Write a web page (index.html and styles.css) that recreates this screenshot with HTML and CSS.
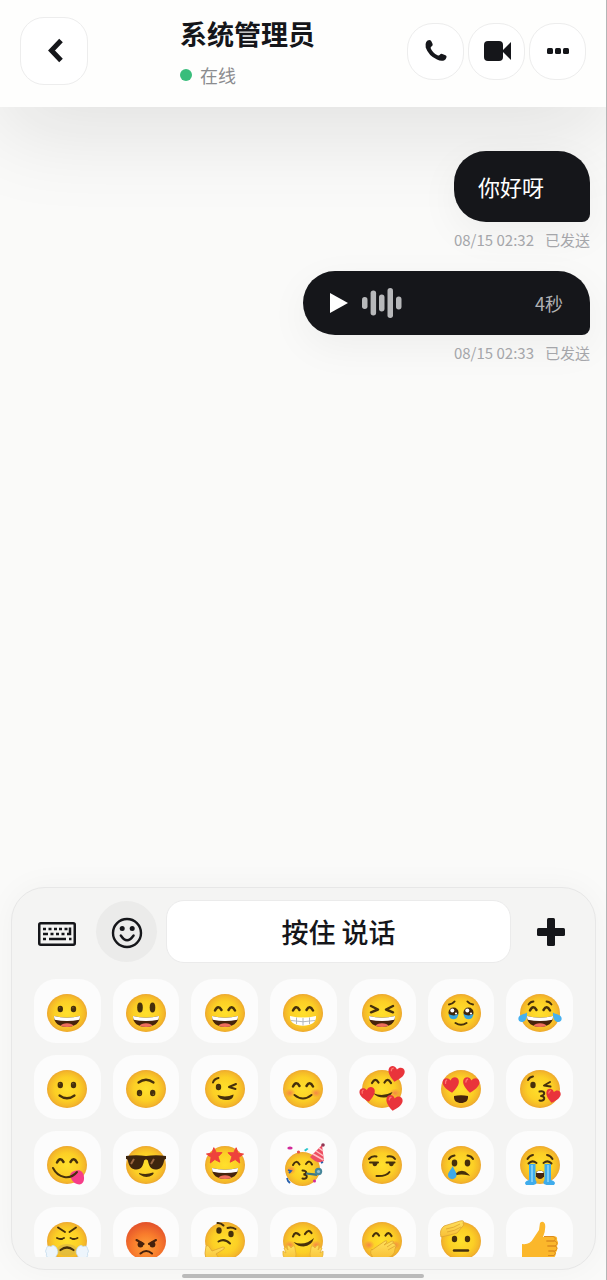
FILE: index.html
```html
<!DOCTYPE html>
<html lang="zh-CN">
<head>
<meta charset="utf-8">
<meta name="viewport" content="width=device-width, initial-scale=1">
<title>系统管理员</title>
<link rel="stylesheet" href="styles.css">
</head>
<body>
<svg class="sprite" aria-hidden="true">
  <defs>
    <radialGradient id="yellow" cx=".5" cy=".5" r=".52"><stop offset="0" stop-color="#ffe02c"/><stop offset=".6" stop-color="#fccf25"/><stop offset=".86" stop-color="#f4b829"/><stop offset="1" stop-color="#e9a031"/></radialGradient>
    <radialGradient id="red" cx=".5" cy=".65" r=".62"><stop offset="0" stop-color="#ffa43a"/><stop offset=".55" stop-color="#f87b2c"/><stop offset="1" stop-color="#e4542b"/></radialGradient>
    <radialGradient id="blush"><stop offset="0" stop-color="#f47c4a" stop-opacity=".85"/><stop offset="1" stop-color="#f47c4a" stop-opacity="0"/></radialGradient>
    <linearGradient id="hand" x2="0" y2="1"><stop offset="0" stop-color="#ffe05c"/><stop offset="1" stop-color="#f8bf36"/></linearGradient>
  </defs>
  <symbol id="face" viewBox="0 0 48 48"><ellipse cx="24" cy="24" rx="20" ry="19" fill="url(#yellow)"/></symbol>
  <symbol id="eyes" viewBox="0 0 48 48"><g fill="#46300c"><ellipse cx="17.3" cy="20" rx="2.700" ry="3.300"/><ellipse cx="30.500" cy="20" rx="2.700" ry="3.300"/></g><g fill="#866329"><circle cx="16.700" cy="18.700" r=".7"/><circle cx="29.900" cy="18.700" r=".7"/></g></symbol>
  <symbol id="happy" viewBox="0 0 48 48"><path d="M14 21.500q3.200-6.200 6.500-.5M27.500 21q3.300-5.700 6.500.5" fill="none" stroke="#46300c" stroke-width="2.500" stroke-linecap="round"/></symbol>
  <symbol id="grin" viewBox="0 0 48 48"><path d="M11 27q13 3.500 26 0c.5 7-5.500 11-13 11S10.500 34 11 27z" fill="#46240c"/><path d="M11 27q13 3.500 26 0 .1 2.200-.7 3.700Q24 33.500 11.700 30.700 11 29 11 27z" fill="#fff"/><path d="M17.500 36.700q1.500-2.500 6.500-2.500t6.500 2.500q-6.500 2.600-13 0z" fill="#ee6d5b"/></symbol>
  <symbol id="smile" viewBox="0 0 48 48"><path d="M16.500 30.500q7.500 5.500 15 0" fill="none" stroke="#46300c" stroke-width="2.200" stroke-linecap="round"/></symbol>
  <symbol id="cheeks" viewBox="0 0 48 48"><ellipse cx="11" cy="28" rx="5.500" ry="4.500" fill="url(#blush)"/><ellipse cx="37" cy="28" rx="5.500" ry="4.500" fill="url(#blush)"/></symbol>
  <symbol id="heart" viewBox="0 0 16 16"><path d="M8 15C2 10.500.5 7.500.8 4.700 1.200 1.200 6 .2 8 4c2-3.800 6.800-2.800 7.200.7C15.500 7.500 14 10.500 8 15z" fill="#e9343b"/><path d="M3.300 6q-.3-2 1.200-2.600" fill="none" stroke="#ff7770" stroke-width="1.200" stroke-linecap="round"/></symbol>
  <symbol id="star" viewBox="0 0 18 18"><path d="M9 .7l2.300 5.500 6 .5-4.600 3.900 1.400 5.900L9 13.300l-5.100 3.200 1.400-5.900L.7 6.700l6-.5z" fill="#ee423c" stroke="#ee423c" stroke-linejoin="round"/></symbol>
</svg>

<div class="app">
  <header class="header">
    <button class="back" type="button" aria-label="返回">
      <svg width="24" height="28" viewBox="0 0 24 28"><path d="M19 3.500 9.500 13.500 19 23.500" fill="none" stroke="#15161a" stroke-width="5"/></svg>
    </button>
    <div class="contact">
      <h1 class="contact-name">系统管理员</h1>
      <p class="contact-status"><span class="dot"></span>在线</p>
    </div>
    <div class="actions">
      <button class="action" type="button" aria-label="语音通话">
        <svg width="24" height="24" viewBox="0 0 24 24"><path d="M2.200 3Q3.200 1.200 5.500 1 7 1 7.600 2.700L8.600 5Q9.100 6.500 7.800 7.300 6.400 8 6.700 9.300 8.500 14 13.500 16.300 15.200 16.900 15.900 15.700 16.800 14.300 18.300 14.900L21.500 16.200Q22.900 16.900 22.500 18.300 22 20.500 20 21.400 17 22.500 13 20.600 4.500 16.600 1.700 8.500 1 5.200 2.200 3Z" fill="#15161a"/></svg>
      </button>
      <button class="action" type="button" aria-label="视频通话">
        <svg width="28" height="20" viewBox="0 0 28 20"><rect x="1" width="19" height="20" rx="4" fill="#15161a"/><path d="m19 10 9-9v18z" fill="#15161a"/></svg>
      </button>
      <button class="action" type="button" aria-label="更多">
        <svg width="22" height="6" viewBox="0 0 22 6"><g fill="#15161a"><rect width="6" height="6" rx="1.500"/><rect x="8" width="6" height="6" rx="1.500"/><rect x="16" width="6" height="6" rx="1.500"/></g></svg>
      </button>
    </div>
  </header>

  <main class="messages">
    <article class="message">
      <p class="bubble">你好呀</p>
      <p class="meta"><time>08/15 02:32</time><span>已发送</span></p>
    </article>
    <article class="message">
      <button class="bubble voice" type="button">
        <svg width="18" height="20" viewBox="0 0 18 20"><path d="M0 0 18 10 0 20z" fill="#fff"/></svg>
        <svg width="40" height="30" viewBox="0 0 40 30"><g fill="#b7b8ba"><rect y="9" width="5.500" height="12" rx="2.700"/><rect x="8.600" y="2.500" width="5.500" height="25" rx="2.700"/><rect x="17" y="6.500" width="5.500" height="17" rx="2.700"/><rect x="25.500" width="5.500" height="30" rx="2.700"/><rect x="34" y="8.500" width="5.500" height="13" rx="2.700"/></g></svg>
        <span class="duration">4秒</span>
      </button>
      <p class="meta"><time>08/15 02:33</time><span>已发送</span></p>
    </article>
  </main>

  <section class="composer">
    <div class="toolbar">
      <button class="tool" type="button" aria-label="键盘">
        <svg width="38" height="28" viewBox="0 -4 38 28"><rect x="1.250" y="1.250" width="35.500" height="21.500" rx="1.500" fill="none" stroke="#15161a" stroke-width="2.500"/><path d="M5 7h3m2.500 0h3M16 7h3m2 0h3m2.500 0h3M5 12h5m2.500 0h3m2.500 0h3m2.500 0h3M5 17h3m3 0h17m3 0h2.500M29 12h3V5.500" fill="none" stroke="#15161a" stroke-width="2.500"/></svg>
      </button>
      <button class="tool tool-active" type="button" aria-label="表情">
        <svg width="32" height="34" viewBox="0 -2 32 34"><circle cx="16" cy="16" r="14" fill="none" stroke="#15161a" stroke-width="2.400"/><circle cx="11.200" cy="11.500" r="2.500" fill="#15161a"/><circle cx="21.200" cy="11.500" r="2.500" fill="#15161a"/><path d="M9.800 18.500q6.200 9.500 12.800 0" fill="none" stroke="#15161a" stroke-width="2.400" stroke-linecap="round"/></svg>
      </button>
      <button class="talk" type="button">按住 说话</button>
      <button class="tool" type="button" aria-label="添加">
        <svg width="28" height="28" viewBox="0 0 28 28"><g fill="#15161a"><rect x="10" width="8" height="28" rx="1.500"/><rect y="10" width="28" height="8" rx="1.500"/></g></svg>
      </button>
    </div>

    <div class="emoji-grid">
      <button class="emoji" type="button" aria-label="嘿嘿"><svg viewBox="0 0 48 48"><use href="#face"/><use href="#eyes"/><use href="#grin"/></svg></button>
      <button class="emoji" type="button" aria-label="哈哈"><svg viewBox="0 0 48 48"><use href="#face"/><g fill="#46300c"><ellipse cx="18" cy="18.500" rx="2.800" ry="5"/><ellipse cx="30.500" cy="18.500" rx="2.800" ry="5"/></g><use href="#grin"/></svg></button>
      <button class="emoji" type="button" aria-label="大笑"><svg viewBox="0 0 48 48"><use href="#face"/><use href="#happy"/><use href="#grin"/></svg></button>
      <button class="emoji" type="button" aria-label="露齿笑"><svg viewBox="0 0 48 48"><use href="#face"/><use href="#happy"/><path d="M11 27q13 3 26 0c.5 6.500-5 9.700-13 9.700S10.500 33.500 11 27z" fill="#fff"/><path d="M12 31.500q12 2.500 24 0M17.500 28.500v6.500M24 29v7.500M30.500 28.500v6.500" fill="none" stroke="#a9b0b8" stroke-width=".9"/></svg></button>
      <button class="emoji" type="button" aria-label="眯眼笑"><svg viewBox="0 0 48 48"><use href="#face"/><path d="m13 17 7 3.500-7 2.800M35 17l-7 3.500 7 2.800" fill="none" stroke="#46300c" stroke-width="2.500" stroke-linecap="round" stroke-linejoin="round"/><use href="#grin"/></svg></button>
      <button class="emoji" type="button" aria-label="忍住泪水"><svg viewBox="0 0 48 48"><use href="#face"/><g fill="#40270c"><circle cx="16.500" cy="23.500" r="5"/><circle cx="31.500" cy="23.500" r="5"/></g><path d="M11.500 25q5 2.800 10 0-.8 5.200-5 5.200T11.500 25zM26.500 25q5 2.800 10 0-.8 5.200-5 5.200t-5-5.200z" fill="#36a5dd"/><g fill="#fff"><circle cx="15.300" cy="21.500" r="2"/><circle cx="30.300" cy="21.500" r="2"/><circle cx="19" cy="24.500" r="1.100"/><circle cx="34" cy="24.500" r="1.100"/></g><path d="M12 15.500q3.500-.3 5.500-3M30.500 12.500q2 2.700 5.500 3M18.500 34q5.500 3.700 11 0" fill="none" stroke="#46300c" stroke-width="2" stroke-linecap="round"/></svg></button>
      <button class="emoji" type="button" aria-label="笑哭"><svg viewBox="0 0 48 48"><use href="#face"/><path d="M12.500 15.500q2-3 5-3M30.500 12.500q3 0 5 3" fill="none" stroke="#46300c" stroke-width="1.800" stroke-linecap="round"/><use href="#happy"/><use href="#grin"/><path d="M11 23.500c.5 5-1.500 9.500-5 9.500-4 0-4.800-4.500-2-6.500 2-1.400 5-1.500 7-3zM37 23.500c-.5 5 1.500 9.500 5 9.500 4 0 4.800-4.500 2-6.500-2-1.400-5-1.500-7-3z" fill="#45b0ef"/></svg></button>

      <button class="emoji" type="button" aria-label="微笑"><svg viewBox="0 0 48 48"><use href="#face"/><use href="#eyes"/><use href="#smile"/></svg></button>
      <button class="emoji" type="button" aria-label="倒脸"><svg viewBox="0 0 48 48"><use href="#face"/><g transform="rotate(180 24 24)"><use href="#eyes"/><use href="#smile"/></g></svg></button>
      <button class="emoji" type="button" aria-label="眨眼"><svg viewBox="0 0 48 48"><use href="#face"/><ellipse cx="17.500" cy="22" rx="2.700" ry="3.200" fill="#46300c"/><path d="M12 17.500q1-3.500 5.500-4.500M35 19l-7 3 6.500 2" fill="none" stroke="#46300c" stroke-width="2" stroke-linecap="round" stroke-linejoin="round"/><path d="M16.500 30q8 3 16-.5c0 4.500-4 6-8 5.500s-7-1.500-8-5z" fill="#46300c"/></svg></button>
      <button class="emoji" type="button" aria-label="羞涩微笑"><svg viewBox="0 0 48 48"><use href="#face"/><use href="#cheeks"/><use href="#happy"/><path d="M15.500 30q8.500 7 17 0" fill="none" stroke="#46300c" stroke-width="2" stroke-linecap="round"/></svg></button>
      <button class="emoji" type="button" aria-label="喜爱"><svg viewBox="0 0 48 48"><use href="#face"/><use href="#cheeks"/><path d="M14 18q3.200-6 6.500-.5M26.500 17.500q3.300-5.500 6.500.5" fill="none" stroke="#46300c" stroke-width="2.200" stroke-linecap="round"/><path d="M15 28q9.500 4.500 19.500-1-2 5.500-8.500 5.500-6.500.2-11-4.500z" fill="#46300c"/><use href="#heart" x="29" y="0" width="18" height="18" transform="rotate(12 38 9)"/><use href="#heart" x="1" y="21" width="17" height="17" transform="rotate(-10 9 29)"/><use href="#heart" x="27" y="29" width="18" height="18" transform="rotate(10 36 38)"/></svg></button>
      <button class="emoji" type="button" aria-label="花痴"><svg viewBox="0 0 48 48"><use href="#face"/><use href="#heart" x="5" y="11" width="18" height="18" transform="rotate(-7 13 19)"/><use href="#heart" x="25" y="11" width="18" height="18" transform="rotate(7 35 19)"/><path d="M17 31q7-1.500 14 0c.5 5-3 7-7 7s-7.500-2-7-7z" fill="#46240c"/></svg></button>
      <button class="emoji" type="button" aria-label="飞吻"><svg viewBox="0 0 48 48"><use href="#face"/><ellipse cx="17" cy="20" rx="2.700" ry="3.200" fill="#46300c"/><path d="M12 15q1.500-3 5-3.500M34 17l-6 3.500 6.500 1M23.500 26.500c6-1 6 3.500 1.500 4.500 5 .5 4 5.500-1.500 4.500" fill="none" stroke="#46300c" stroke-width="2" stroke-linecap="round" stroke-linejoin="round"/><use href="#heart" x="29" y="23" width="16" height="16" transform="rotate(12 37 31)"/></svg></button>

      <button class="emoji" type="button" aria-label="好吃"><svg viewBox="0 0 48 48"><use href="#face"/><use href="#happy"/><path d="M27.500 36c-1-4 2-6 6-6.500 4-1 7 1.500 7.500 6.500.5 6-3 8.500-7 7-3.500-1-5.500-4-6.500-7z" fill="#f63d88"/><path d="M10 27c5 10 17 12.500 24 4" fill="none" stroke="#46300c" stroke-width="2" stroke-linecap="round"/></svg></button>
      <button class="emoji" type="button" aria-label="墨镜"><svg viewBox="0 0 48 48"><use href="#face"/><path d="M4 15q10-1.500 20 0 10-1.500 20 0v3q-2 0-2 2c-1 6-4 8.500-8.500 8.500-5 0-6.500-4-7.500-8.500-.5-2-3.500-2-4 0-1 4.500-2.500 8.500-7.500 8.500C10 28.500 7 26 6 20q0-2-2-2z" fill="#3e250d"/><path d="m9 23 3-5M29 23l3-5" stroke="#9a6540" stroke-width="2"/><path d="M17 32q7 2 14-.5 1.500.5-.5 2.500-6 4-12 0-2-1-1.500-2z" fill="#46300c"/></svg></button>
      <button class="emoji" type="button" aria-label="好崇拜"><svg viewBox="0 0 48 48"><use href="#face"/><use href="#grin"/><use href="#star" x="5" y="6" width="17" height="17" transform="rotate(-5 13 15)"/><use href="#star" x="26" y="6" width="17" height="17" transform="rotate(5 34 15)"/></svg></button>
      <button class="emoji" type="button" aria-label="聚会"><svg viewBox="0 0 48 48"><ellipse cx="23.500" cy="28" rx="17.500" ry="17" fill="url(#yellow)"/><ellipse cx="12" cy="29" rx="5" ry="4.500" fill="url(#blush)"/><path d="m31 16 12-12 2 16q-6 4-14-4z" fill="#ee4e62"/><path d="m34 13 10.500 6M37 10l7.500 5M40 7l4 3" stroke="#ffc0c4" stroke-width="1.500"/><circle cx="44" cy="4" r="1.800" fill="#923653"/><path d="M14 24q3-6 6.500-.5M27 23q3.500-5 6 .5M23.500 29.500c5 .5 4.500 3 1 4 5 0 4 5-1 4" fill="none" stroke="#46300c" stroke-width="2" stroke-linecap="round"/><path d="M27 33.500 38 35v-2.500l-11-1z" fill="#3e7782"/><circle cx="39.500" cy="30.500" r="3.700" fill="#46869a"/><circle cx="39.500" cy="30.500" r="1.600" fill="#9cc3cb"/><g fill="#d22a9a"><ellipse cx="11" cy="7" rx="2.700" ry="1.500"/><circle cx="35.500" cy="40" r="1.500"/></g><circle cx="19.500" cy="11" r="1.600" fill="#e4514b"/><path d="m25 9 3-2 1.500 1-3 2.500z" fill="#25c3ca"/><path d="m9 29 3 1-2 2M8 37l1 3 2 2M42 22l2-1" fill="none" stroke="#265fad" stroke-width="1.800"/></svg></button>
      <button class="emoji" type="button" aria-label="得意"><svg viewBox="0 0 48 48"><use href="#face"/><path d="M11 18q3-3.500 7.500-2.500M29.500 15.500q5-1 7.500 2.500M12 21.500h8M28.500 21.500h8M18.500 35q10 .5 13-4" fill="none" stroke="#46300c" stroke-width="2" stroke-linecap="round"/><path d="M14.500 22h5q-.5 3.200-2.700 3.200T14.500 22zM31 22h5q-.5 3.200-2.700 3.200T31 22z" fill="#46300c"/></svg></button>
      <button class="emoji" type="button" aria-label="哭"><svg viewBox="0 0 48 48"><use href="#face"/><g fill="#46300c"><ellipse cx="17.500" cy="22" rx="2.800" ry="3.400"/><ellipse cx="30.500" cy="22" rx="2.800" ry="3.400"/></g><path d="M12 18q1.500-3 5.500-3.500M30.500 14.500q4 .5 5.500 3.500" fill="none" stroke="#46300c" stroke-width="2" stroke-linecap="round"/><path d="M18.500 33.500q6.500-6 12.500 0-6.500-1.500-12.500 0z" fill="#46300c" stroke="#46300c" stroke-width="1.300"/><path d="M15.500 25c2 4 4 6.500 4 9 0 5.500-8.500 5.500-8.500 0 0-3 3-5 4.500-9z" fill="#3ea9e8"/></svg></button>
      <button class="emoji" type="button" aria-label="放声大哭"><svg viewBox="0 0 48 48"><use href="#face"/><path d="M11.500 18q2-3.500 5.500-4M31 14q3.500.5 5.500 4M12.500 22.500q3.500-4 8-.5M27.500 22q4.500-3.500 8 .5" fill="none" stroke="#46300c" stroke-width="2" stroke-linecap="round"/><path d="M13 23h6.500v16q3 4-2 5H10q-3-3 3-5zM28.500 23H35v16q6 2 3 5h-7.500q-5-1-2-5z" fill="#3facec"/><path d="M16 24v17M32 24v17" stroke="#7bcdf5" stroke-width="2"/><path d="M20 31q4-3 8 0v4.500q-4 5-8 0z" fill="#46240c"/><path d="M20.500 31q3.500-2.500 7 0v1h-7z" fill="#fff"/></svg></button>

      <button class="emoji" type="button" aria-label="傲慢"><svg viewBox="0 0 48 48"><use href="#face"/><path d="m15 10.500 7 4.500M26.500 15l6.500-4.500M14 21q3.500 2 7 0M27.500 21q3.500 2 7 0" fill="none" stroke="#46300c" stroke-width="1.900" stroke-linecap="round"/><path d="M16 21.500h4.500q-2 3-4.500 0zM28 21.500h4.500q-2 3-4.500 0z" fill="#46300c"/><ellipse cx="24" cy="33" rx="10" ry="6" fill="#dcb744" opacity=".7"/><path d="M17.500 33q6.500-5 13 0" fill="none" stroke="#46300c" stroke-width="2.200" stroke-linecap="round"/><g fill="#edf5fc" stroke="#bdd7ea" stroke-width=".7"><path d="M13 30q-3-3-5-.5-4-1.500-4.500 2-2 3 0 5-1 5 4 4 5 2 6-2 3-4-.5-8.500zM35 30q3-3 5-.5 4-1.500 4.500 2 2 3 0 5 1 5-4 4-5 2-6-2-3-4 .5-8.500z"/></g></svg></button>
      <button class="emoji" type="button" aria-label="发怒"><svg viewBox="0 0 48 48"><ellipse cx="24" cy="24" rx="20" ry="19" fill="url(#red)"/><g fill="#46210c"><circle cx="18.500" cy="27.500" r="2.900"/><circle cx="30.500" cy="27.500" r="2.900"/></g><path d="m14.500 23 7 4M34 23l-7 4M18.500 36.500q5.700-5 11.500 0" fill="none" stroke="#46210c" stroke-width="2.100" stroke-linecap="round"/></svg></button>
      <button class="emoji" type="button" aria-label="想一想"><svg viewBox="0 0 48 48"><use href="#face"/><g fill="#46300c"><ellipse cx="18" cy="13.500" rx="2.700" ry="3.200"/><ellipse cx="30" cy="17" rx="2.700" ry="3.200"/></g><path d="M16.500 6q3-.5 6 2.500M26.500 11q4-1.500 8 1M17.500 24.500q6-3.500 11.500 2" fill="none" stroke="#46300c" stroke-width="2" stroke-linecap="round"/><path d="M5 29q2-2 4 2l2 3 11-4q2.500 0 1 2l-8 5q3 2 1 5-5 4-11 0-2-5 0-13z" fill="url(#hand)" stroke="#dda331" stroke-width=".8"/></svg></button>
      <button class="emoji" type="button" aria-label="抱抱"><svg viewBox="0 0 48 48"><use href="#face"/><use href="#cheeks"/><path d="M14 19.500q2-6 6.500-1.500M26 17q3.500-5.500 6.500-1" fill="none" stroke="#46300c" stroke-width="2.200" stroke-linecap="round"/><path d="M14.500 25q11 4.500 20.500-4-2.500 8-10.500 8.500-6 0-10-4.500z" fill="#46300c"/><path d="m4 34 3 2-2-5q2-2 4 2l-1-4q2-2 4 2l2-2q2-1 2 2l1 6q0 7-6 7-8-1-7-10zM44 34l-3 2 2-5q-2-2-4 2l1-4q-2-2-4 2l-2-2q-2-1-2 2l-1 6q0 7 6 7 8-1 7-10z" fill="url(#hand)" stroke="#e5ae35" stroke-width=".8"/></svg></button>
      <button class="emoji" type="button" aria-label="不语"><svg viewBox="0 0 48 48"><use href="#face"/><use href="#cheeks"/><path d="M15 19q3-5.500 6-.5M27.500 18.500q3-5 6 .5" fill="none" stroke="#46300c" stroke-width="2.200" stroke-linecap="round"/><path d="m14 33 13-9q2-1 2 1l-3 3 8-4q2.500 0 1 2l2 1 1 2-1 3q0 7-8 9l-12 1q-7-6-3-10z" fill="url(#hand)" stroke="#dda331" stroke-width=".8"/><path d="m29 30 6-4M30 33l7-4" stroke="#dda331" stroke-width=".8"/></svg></button>
      <button class="emoji" type="button" aria-label="致敬"><svg viewBox="0 0 48 48"><use href="#face"/><g fill="#46300c"><ellipse cx="17.500" cy="22" rx="2.700" ry="3.200"/><ellipse cx="30.500" cy="22" rx="2.700" ry="3.200"/></g><path d="M17 33.500h14" stroke="#46300c" stroke-width="2.400" stroke-linecap="round"/><path d="M4 20q-2-7 3-11L23 4q5-1 3 2 2 2-1 4l-5 6-7 2z" fill="url(#hand)" stroke="#dda331" stroke-width=".8"/><path d="M9 12q8-1 14-5M10 15q8-1 14-5" fill="none" stroke="#dda331" stroke-width=".8"/></svg></button>
      <button class="emoji" type="button" aria-label="赞"><svg viewBox="0 0 48 48"><path d="M6 27q8 1 11-5l6-9 1-7q3-3 5 1 1 6-2 13l10-1q5 0 4 4 2 3 0 6 1 4-1 6 0 5-3 6-3 4-12 4H14l-8-3z" fill="#fbb72b"/><path d="M28 19.500h9q4 1 1 4.500h-8m1 0h8q4 2 0 5h-8m1 0h7q4 2 0 5h-7m1 0h5q3 2 0 4.500h-6" fill="none" stroke="#dc8b1f" stroke-width="1"/></svg></button>
    </div>
  </section>
  <div class="home-indicator"></div>
</div>
</body>
</html>
```

FILE: styles.css
```css
* {
  box-sizing: border-box;
}

body {
  margin: 0;
  color: #15161a;
  background: #fafaf9;
  font-family: "Noto Sans CJK SC", "Noto Sans", sans-serif;
}

h1,
p {
  margin: 0;
}

button {
  padding: 0;
  border: 0;
  color: inherit;
  background: none;
  font: inherit;
}

svg {
  display: block;
  flex: none;
}

.sprite {
  position: absolute;
  width: 0;
  height: 0;
}

.app {
  display: flex;
  flex-direction: column;
  height: 100vh;
  overflow: hidden;
  border-right: 1px solid #b5b5b6;
}

.header {
  display: flex;
  flex: none;
  align-items: center;
  justify-content: space-between;
  padding: 15px 20px 20px;
  background: #fefefd;
  box-shadow: 0 24px 88px rgba(20, 20, 22, 0.11);
}

.back,
.action {
  display: flex;
  align-items: center;
  justify-content: center;
  border: 1px solid #ededed;
  background: #fff;
}

.back {
  width: 68px;
  height: 68px;
  border-radius: 24px;
}

.contact-name {
  font-size: 27px;
  font-weight: 700;
  line-height: 38px;
}

.contact-status {
  display: flex;
  align-items: center;
  gap: 8px;
  margin-top: 10px;
  color: #8b8c8f;
  font-size: 18px;
  line-height: 24px;
}

.dot {
  width: 12px;
  height: 12px;
  border-radius: 50%;
  background: #39bd7b;
}

.actions {
  display: flex;
  gap: 4px;
}

.action {
  width: 57px;
  height: 57px;
  border-radius: 26px;
}

.messages {
  display: flex;
  flex: 1;
  flex-direction: column;
  align-items: flex-end;
  gap: 21px;
  min-height: 0;
  padding: 44px 16px 20px;
}

.message {
  display: flex;
  flex-direction: column;
  gap: 7px;
}

.bubble {
  padding: 18px 24px;
  border-radius: 32px 32px 8px 32px;
  color: #fff;
  background: #15161a;
  box-shadow: 0 12px 40px rgba(20, 20, 22, 0.05);
  font-size: 22px;
  line-height: 35px;
}

.voice {
  display: flex;
  align-items: center;
  gap: 14px;
  width: 287px;
  height: 64px;
  padding: 0 27px;
}

.duration {
  margin-left: auto;
  color: #b0b1b3;
  font-size: 18px;
}

.meta {
  display: flex;
  align-self: flex-end;
  gap: 11px;
  color: #a5a6aa;
  font-size: 15px;
  line-height: 21px;
}

.composer {
  flex: none;
  margin: 0 10px 0 11px;
  padding: 12px 14px;
  border: 1px solid #e7e7e7;
  border-radius: 34px;
  background: #f4f4f3;
  box-shadow: 0 0 32px rgba(20, 20, 22, 0.04);
}

.toolbar {
  display: flex;
  align-items: center;
  gap: 9px;
}

.tool {
  display: flex;
  flex: none;
  align-items: center;
  justify-content: center;
  width: 61px;
  height: 61px;
  border-radius: 50%;
}

.tool-active {
  background: #ebebea;
}

.talk {
  flex: 1;
  height: 63px;
  border: 1px solid #ebebeb;
  border-radius: 18px;
  background: #fff;
  font-size: 27px;
  font-weight: 500;
}

.emoji-grid {
  display: grid;
  grid-template-columns: repeat(7, 1fr);
  grid-auto-rows: 64px;
  gap: 12px;
  height: 278px;
  margin-top: 16px;
  padding: 0 8px;
  overflow: hidden;
}

.emoji {
  display: flex;
  align-items: center;
  justify-content: center;
  padding-top: 4px;
  border-radius: 22px;
  background: #fcfcfc;
}

.emoji svg {
  width: 48px;
  height: 48px;
}

.home-indicator {
  flex: none;
  align-self: center;
  width: 40%;
  height: 4px;
  margin: 4px 0 2px;
  border-radius: 2px;
  background: #bababa;
}
```
